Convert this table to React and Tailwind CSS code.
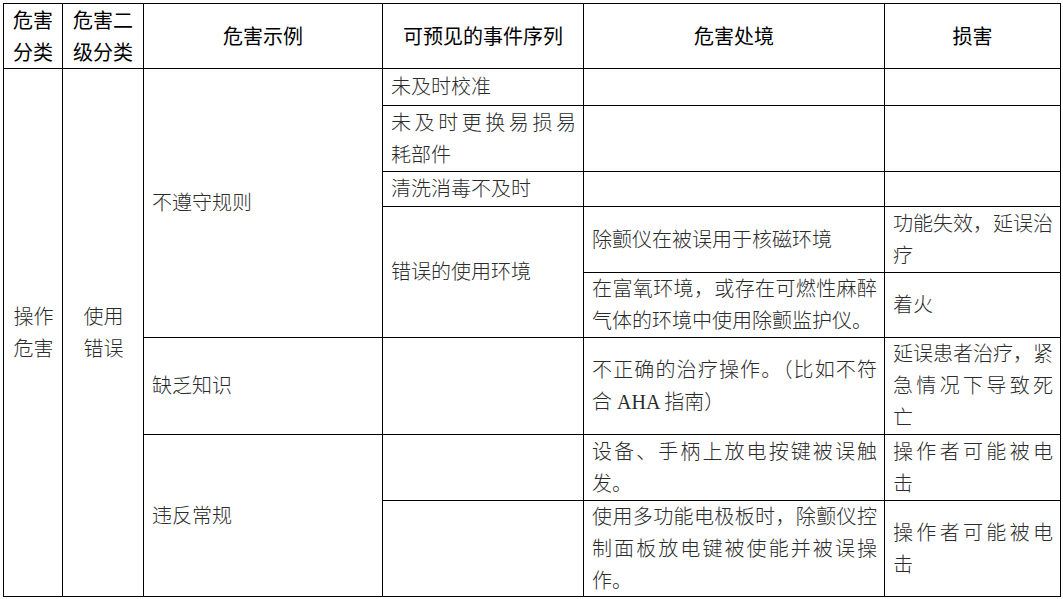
const body = { fontFamily: '"Liberation Serif", "Noto Sans CJK SC", serif' };
const head = { fontFamily: '"Noto Sans CJK SC", sans-serif' };

// each line is its own block so wrapping matches the document;
// every line except the last is stretched like Word's justified text
const Lines = ({ lines }) =>
  lines.map((line, i) => (
    <div
      key={i}
      className={
        i < lines.length - 1
          ? "whitespace-nowrap text-justify [text-align-last:justify]"
          : "whitespace-nowrap"
      }
    >
      {line}
    </div>
  ));

const Cell = ({ className = "", lines = [], center = false }) => (
  <div
    className={`flex flex-col justify-center bg-white pl-2 pr-[7px] text-[20px] leading-[32px] font-light text-[#2b2b2b] ${
      center ? "items-center" : ""
    } ${className}`}
    style={body}
  >
    {lines.length > 0 && (
      <div className={center ? "" : "w-full"}>
        <Lines lines={lines} />
      </div>
    )}
  </div>
);

const Head = ({ className = "", lines }) => (
  <div
    className={`flex flex-col items-center justify-center bg-white px-2 text-[20px] leading-[32px] text-black ${className}`}
    style={head}
  >
    <div>
      <Lines lines={lines} />
    </div>
  </div>
);

export default function App() {
  return (
    <div className="min-h-[599px] w-[1063px] bg-white pl-[3px] pt-[3px]">
      <div className="grid w-[1058px] grid-cols-[58px_80px_238px_200px_300px_175px] grid-rows-[64px_36px_65px_34px_65px_64px_96px_65px_95px] gap-px bg-black p-px">
        <Head className="col-start-1 row-start-1" lines={["危害", "分类"]} />
        <Head className="col-start-2 row-start-1" lines={["危害二", "级分类"]} />
        <Head className="col-start-3 row-start-1" lines={["危害示例"]} />
        <Head className="col-start-4 row-start-1" lines={["可预见的事件序列"]} />
        <Head className="col-start-5 row-start-1" lines={["危害处境"]} />
        <Head className="col-start-6 row-start-1" lines={["损害"]} />

        <Cell className="col-start-1 row-start-2 row-span-8" center lines={["操作", "危害"]} />
        <Cell className="col-start-2 row-start-2 row-span-8" center lines={["使用", "错误"]} />
        <Cell className="col-start-3 row-start-2 row-span-5" lines={["不遵守规则"]} />

        <Cell className="col-start-4 row-start-2" lines={["未及时校准"]} />
        <Cell className="col-start-5 row-start-2" />
        <Cell className="col-start-6 row-start-2" />

        <Cell className="col-start-4 row-start-3" lines={["未及时更换易损易", "耗部件"]} />
        <Cell className="col-start-5 row-start-3" />
        <Cell className="col-start-6 row-start-3" />

        <Cell className="col-start-4 row-start-4" lines={["清洗消毒不及时"]} />
        <Cell className="col-start-5 row-start-4" />
        <Cell className="col-start-6 row-start-4" />

        <Cell className="col-start-4 row-start-5 row-span-2" lines={["错误的使用环境"]} />
        <Cell className="col-start-5 row-start-5" lines={["除颤仪在被误用于核磁环境"]} />
        <Cell className="col-start-6 row-start-5" lines={["功能失效，延误治", "疗"]} />
        <Cell
          className="col-start-5 row-start-6"
          lines={["在富氧环境，或存在可燃性麻醉", "气体的环境中使用除颤监护仪。"]}
        />
        <Cell className="col-start-6 row-start-6" lines={["着火"]} />

        <Cell className="col-start-3 row-start-7" lines={["缺乏知识"]} />
        <Cell className="col-start-4 row-start-7" />
        <Cell className="col-start-5 row-start-7" lines={["不正确的治疗操作。（比如不符", "合 AHA 指南）"]} />
        <Cell className="col-start-6 row-start-7" lines={["延误患者治疗，紧", "急情况下导致死", "亡"]} />

        <Cell className="col-start-3 row-start-8 row-span-2" lines={["违反常规"]} />
        <Cell className="col-start-4 row-start-8" />
        <Cell className="col-start-5 row-start-8" lines={["设备、手柄上放电按键被误触", "发。"]} />
        <Cell className="col-start-6 row-start-8" lines={["操作者可能被电", "击"]} />

        <Cell className="col-start-4 row-start-9" />
        <Cell
          className="col-start-5 row-start-9"
          lines={["使用多功能电极板时，除颤仪控", "制面板放电键被使能并被误操", "作。"]}
        />
        <Cell className="col-start-6 row-start-9" lines={["操作者可能被电", "击"]} />
      </div>
    </div>
  );
}
